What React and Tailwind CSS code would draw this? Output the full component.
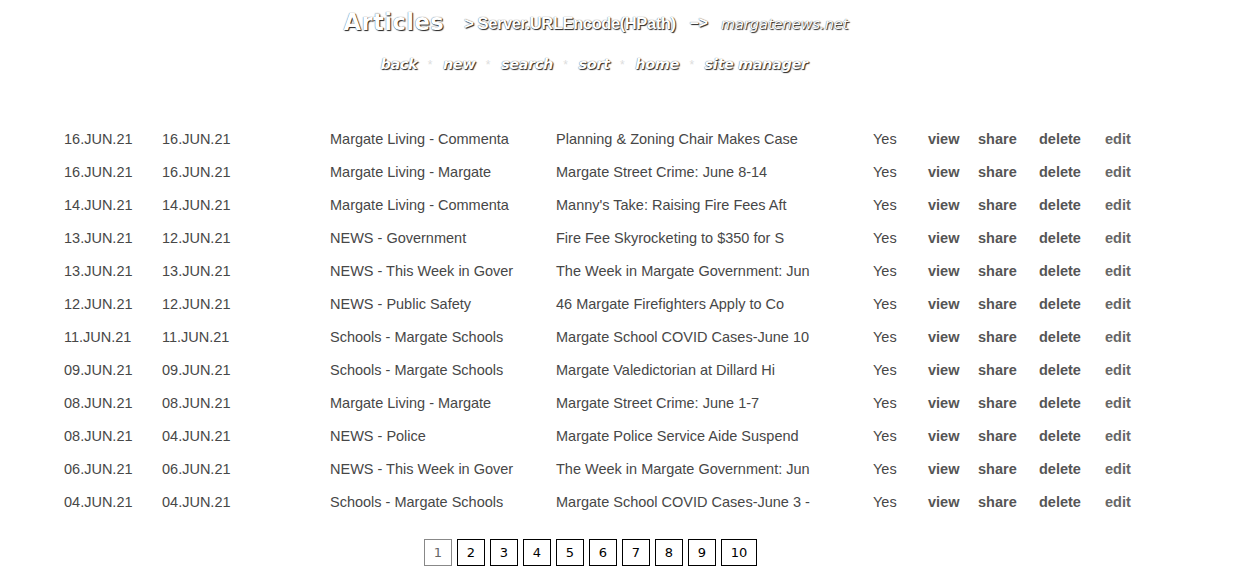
const ROWS = [
  ['16.JUN.21', '16.JUN.21', 'Margate Living - Commenta', 'Planning & Zoning Chair Makes Case'],
  ['16.JUN.21', '16.JUN.21', 'Margate Living - Margate', 'Margate Street Crime: June 8-14'],
  ['14.JUN.21', '14.JUN.21', 'Margate Living - Commenta', "Manny's Take: Raising Fire Fees Aft"],
  ['13.JUN.21', '12.JUN.21', 'NEWS - Government', 'Fire Fee Skyrocketing to $350 for S'],
  ['13.JUN.21', '13.JUN.21', 'NEWS - This Week in Gover', 'The Week in Margate Government: Jun'],
  ['12.JUN.21', '12.JUN.21', 'NEWS - Public Safety', '46 Margate Firefighters Apply to Co'],
  ['11.JUN.21', '11.JUN.21', 'Schools - Margate Schools', 'Margate School COVID Cases-June 10'],
  ['09.JUN.21', '09.JUN.21', 'Schools - Margate Schools', 'Margate Valedictorian at Dillard Hi'],
  ['08.JUN.21', '08.JUN.21', 'Margate Living - Margate', 'Margate Street Crime: June 1-7'],
  ['08.JUN.21', '04.JUN.21', 'NEWS - Police', 'Margate Police Service Aide Suspend'],
  ['06.JUN.21', '06.JUN.21', 'NEWS - This Week in Gover', 'The Week in Margate Government: Jun'],
  ['04.JUN.21', '04.JUN.21', 'Schools - Margate Schools', 'Margate School COVID Cases-June 3 -'],
]

const NAV = ['back', 'new', 'search', 'sort', 'home', 'site manager']

const shadow = '[text-shadow:1px_1px_1px_#222,0_0_1px_#444]'

export default function App() {
  return (
    <div className="bg-white min-h-[577px] font-['Liberation_Sans',Arial,sans-serif]">
      {/* header */}
      <div className="flex items-end justify-center pt-[3px] pr-[48px] h-[33px] text-white">
        <span className={`font-['DejaVu_Sans',sans-serif] font-bold text-[22.5px] leading-none tracking-[0.5px] ${shadow}`}>Articles</span>
        <span className={`ml-[20px] font-bold text-[16.5px] leading-none mb-[2px] tracking-[-0.4px] ${shadow}`}>&gt; Server.URLEncode(HPath)</span>
        <span className={`ml-[14px] font-bold text-[16px] leading-none mb-[2px] ${shadow}`}>&ndash;&gt;</span>
        <span className={`ml-[13px] font-['DejaVu_Sans',sans-serif] italic text-[14.5px] leading-none mb-[2px] ${shadow}`}>margatenews.net</span>
      </div>

      {/* nav */}
      <div className="flex items-center justify-center mt-[22px] h-[20px] pr-[52px]">
        {NAV.map((n, i) => (
          <span key={n} className="flex items-center">
            {i > 0 && <span className="mx-[10.5px] text-[12px] text-[#ddd]">*</span>}
            <span className={`font-['DejaVu_Sans',sans-serif] italic font-bold text-[14.5px] text-white tracking-[-0.4px] ${shadow}`}>{n}</span>
          </span>
        ))}
      </div>

      {/* list */}
      <div className="mt-[48px] text-[14.5px] text-[#474747]">
        {ROWS.map((r, i) => (
          <div key={i} className="flex items-center h-[33px]">
            <span className="ml-[64px] w-[98px]">{r[0]}</span>
            <span className="w-[168px]">{r[1]}</span>
            <span className="w-[226px]">{r[2]}</span>
            <span className="w-[317px]">{r[3]}</span>
            <span className="w-[55px]">Yes</span>
            <span className="w-[50px] font-bold text-[#555]">view</span>
            <span className="w-[61px] font-bold text-[#555]">share</span>
            <span className="w-[66px] font-bold text-[#555]">delete</span>
            <span className="font-bold text-[#666]">edit</span>
          </div>
        ))}
      </div>

      {/* pages */}
      <div className="flex justify-center gap-[5px] mt-[20px] pr-[59px] font-['DejaVu_Sans',Verdana,sans-serif] text-[13px]">
        {[1, 2, 3, 4, 5, 6, 7, 8, 9, 10].map(p => (
          <span key={p}
            className={`flex items-center justify-center h-[27px] ${p === 10 ? 'w-[36px]' : 'w-[28px]'} border ${p === 1 ? 'border-[#888] text-[#666]' : 'border-black text-black'}`}>
            {p}
          </span>
        ))}
      </div>
    </div>
  )
}
